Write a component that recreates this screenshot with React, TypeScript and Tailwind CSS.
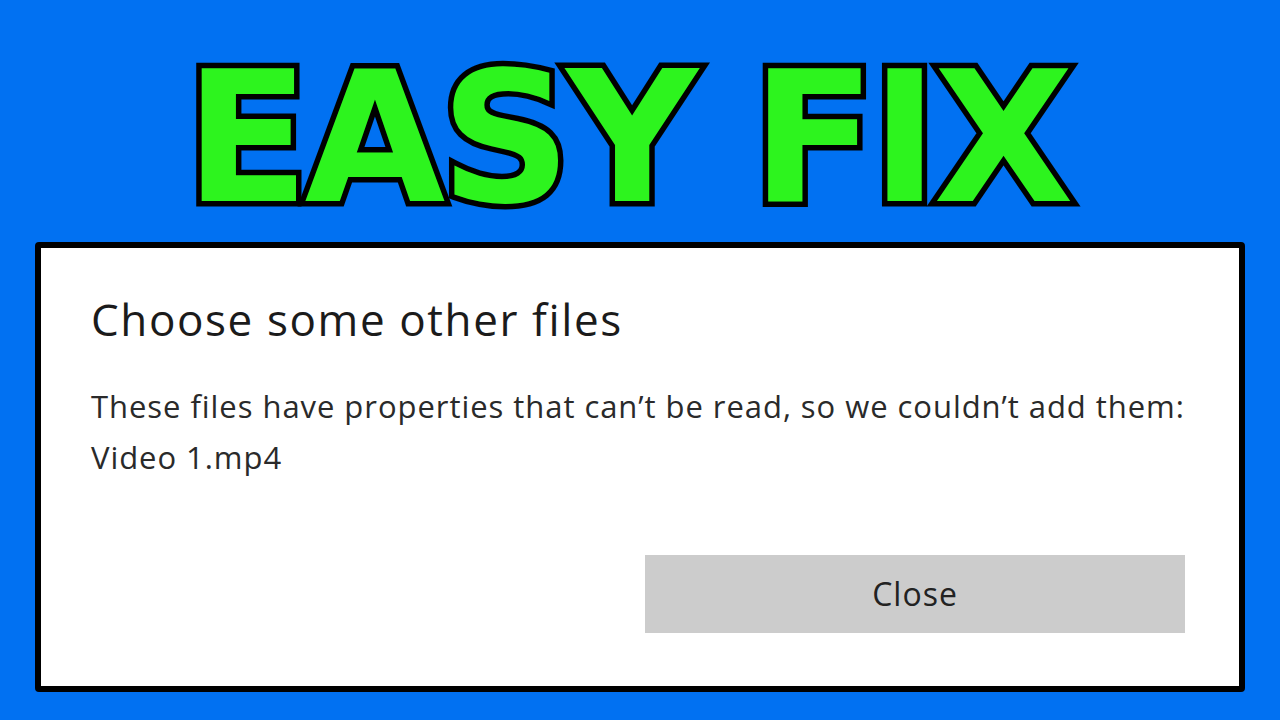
export default function App() {
  return (
    <div className="w-[1280px] h-[720px] bg-[#0171f2] flex flex-col items-center overflow-hidden">
      {/* headline */}
      <h1
        className="mt-[43px] mr-[26px] text-[182px] leading-[190px] font-bold tracking-[-5px] text-[#2df41e] [font-family:'DejaVu_Sans',sans-serif] [-webkit-text-stroke:11px_#000] [paint-order:stroke_fill] whitespace-nowrap"
      >
        EASY FIX
      </h1>

      {/* dialog */}
      <div className="mt-[9px] w-[1210px] h-[450px] bg-white border-[6px] border-black rounded-[4px] flex flex-col pl-[50px] pr-[54px] [font-family:'Open_Sans','Noto_Sans',sans-serif]">
        <h2 className="mt-[45px] text-[44px] leading-[53px] font-normal tracking-[1.6px] text-[#1b1b1b]">
          Choose some other files
        </h2>
        <p className="mt-[35px] text-[31px] leading-[51px] tracking-[0.95px] text-[#2a2a2a]">
          These files have properties that can’t be read, so we couldn’t add them:
          <br />
          Video 1.mp4
        </p>
        <div className="mt-[72px] flex justify-end">
          <button className="w-[540px] h-[78px] bg-[#cccccc] text-[32px] tracking-[1px] text-[#222] flex items-center justify-center">
            Close
          </button>
        </div>
      </div>
    </div>
  );
}
